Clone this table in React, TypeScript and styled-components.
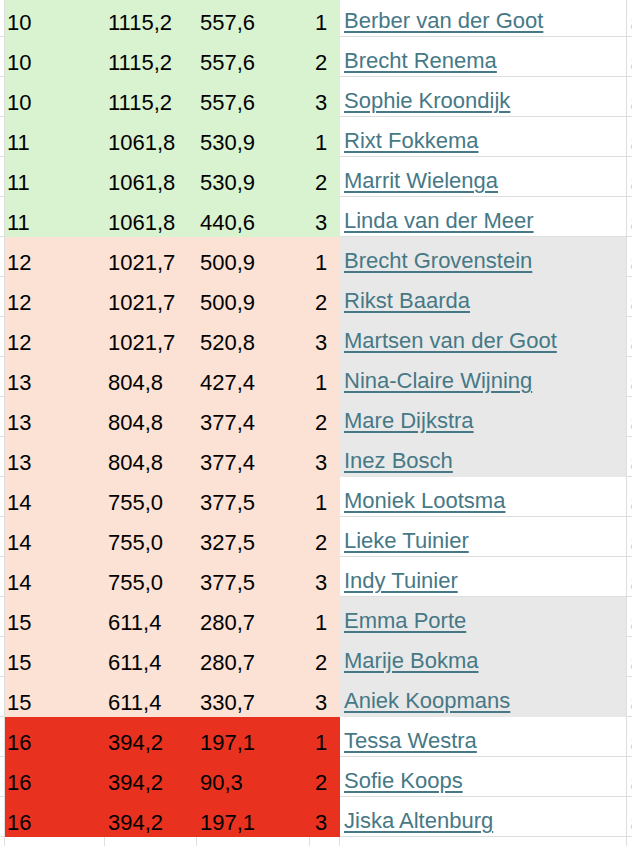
import React from "react";
import styled, { createGlobalStyle } from "styled-components";

const GlobalStyle = createGlobalStyle`
  html, body {
    margin: 0;
    padding: 0;
    background: #ffffff;
    overflow: hidden;
  }
  * { box-sizing: border-box; }
`;

const GRID = "#dedede";
const FILLS: Record<string, string> = {
  green: "#d9f2d0",
  salmon: "#fbe2d5",
  red: "#e8321f",
  gray: "#e8e8e8",
  none: "#ffffff",
};

type Band = "green" | "salmon" | "red" | "none";

const Sheet = styled.div`
  margin-top: -3px;
  width: 632px;
  overflow: hidden;
  font-family: "Liberation Sans", Arial, sans-serif;
  font-size: 22px;
  color: #000;
`;

const Row = styled.div`
  display: grid;
  grid-template-columns: 5px 100px 92px 113px 30px 287px 40px;
  height: 40px;
`;

const Cell = styled.div<{ $fill: string; $align?: "left" | "right" | "center"; $pad?: string }>`
  display: flex;
  align-items: flex-end;
  justify-content: ${(p) =>
    p.$align === "right" ? "flex-end" : p.$align === "center" ? "center" : "flex-start"};
  padding: ${(p) => p.$pad ?? "0 0 0 2px"};
  background: ${(p) => (p.$fill === "none" ? "#ffffff" : FILLS[p.$fill])};
  border-right: 1px solid ${(p) => (p.$fill === "none" ? GRID : FILLS[p.$fill])};
  border-bottom: 1px solid ${(p) => (p.$fill === "none" ? GRID : FILLS[p.$fill])};
  white-space: nowrap;
  overflow: hidden;
`;

const Edge = styled.div`
  background: #ffffff;
  border-right: 1px solid ${GRID};
  border-bottom: 1px solid ${GRID};
`;

const NameCell = styled(Cell)`
  border-right: 1px solid ${GRID};
  padding: 0 0 2px 4px;
`;

const NameLink = styled.a`
  color: #467886;
  text-decoration: underline;
  text-decoration-thickness: 1.5px;
  text-underline-offset: 3px;
  cursor: pointer;
`;

const Spill = styled(Cell)`
  color: #d0d0d0;
  border-right: none;
  padding: 0 0 0 3px;
`;

type Entry = {
  a: string;
  b: string;
  c: string;
  d: string;
  name: string;
  band: Band;
  gray: boolean;
};

const raw: [string, string, string, string, string, Band, boolean][] = [
  ["10", "1115,2", "557,6", "1", "Berber van der Goot", "green", false],
  ["10", "1115,2", "557,6", "2", "Brecht Renema", "green", false],
  ["10", "1115,2", "557,6", "3", "Sophie Kroondijk", "green", false],
  ["11", "1061,8", "530,9", "1", "Rixt Fokkema", "green", false],
  ["11", "1061,8", "530,9", "2", "Marrit Wielenga", "green", false],
  ["11", "1061,8", "440,6", "3", "Linda van der Meer", "green", false],
  ["12", "1021,7", "500,9", "1", "Brecht Grovenstein", "salmon", true],
  ["12", "1021,7", "500,9", "2", "Rikst Baarda", "salmon", true],
  ["12", "1021,7", "520,8", "3", "Martsen van der Goot", "salmon", true],
  ["13", "804,8", "427,4", "1", "Nina-Claire Wijning", "salmon", true],
  ["13", "804,8", "377,4", "2", "Mare Dijkstra", "salmon", true],
  ["13", "804,8", "377,4", "3", "Inez Bosch", "salmon", true],
  ["14", "755,0", "377,5", "1", "Moniek Lootsma", "salmon", false],
  ["14", "755,0", "327,5", "2", "Lieke Tuinier", "salmon", false],
  ["14", "755,0", "377,5", "3", "Indy Tuinier", "salmon", false],
  ["15", "611,4", "280,7", "1", "Emma Porte", "salmon", true],
  ["15", "611,4", "280,7", "2", "Marije Bokma", "salmon", true],
  ["15", "611,4", "330,7", "3", "Aniek Koopmans", "salmon", true],
  ["16", "394,2", "197,1", "1", "Tessa Westra", "red", false],
  ["16", "394,2", "90,3", "2", "Sofie Koops", "red", false],
  ["16", "394,2", "197,1", "3", "Jiska Altenburg", "red", false],
];

const rows: Entry[] = raw.map(([a, b, c, d, name, band, gray]) => ({
  a,
  b,
  c,
  d,
  name,
  band,
  gray,
}));

export default function App() {
  return (
    <>
      <GlobalStyle />
      <Sheet>
        {rows.map((r, i) => (
          <Row key={i}>
            <Edge />
            <Cell $fill={r.band}>{r.a}</Cell>
            <Cell $fill={r.band} $pad="0 0 0 3px">{r.b}</Cell>
            <Cell $fill={r.band} $pad="0 0 0 3px">{r.c}</Cell>
            <Cell $fill={r.band} $align="center" $pad="0 7px 0 0">{r.d}</Cell>
            <NameCell $fill={r.gray ? "gray" : "none"}>
              <NameLink>{r.name}</NameLink>
            </NameCell>
            <Spill $fill="none">a</Spill>
          </Row>
        ))}
        <Row>
          <Edge />
          <Cell $fill="none" />
          <Cell $fill="none" />
          <Cell $fill="none" />
          <Cell $fill="none" />
          <NameCell $fill="none" />
          <Spill $fill="none" />
        </Row>
      </Sheet>
    </>
  );
}
